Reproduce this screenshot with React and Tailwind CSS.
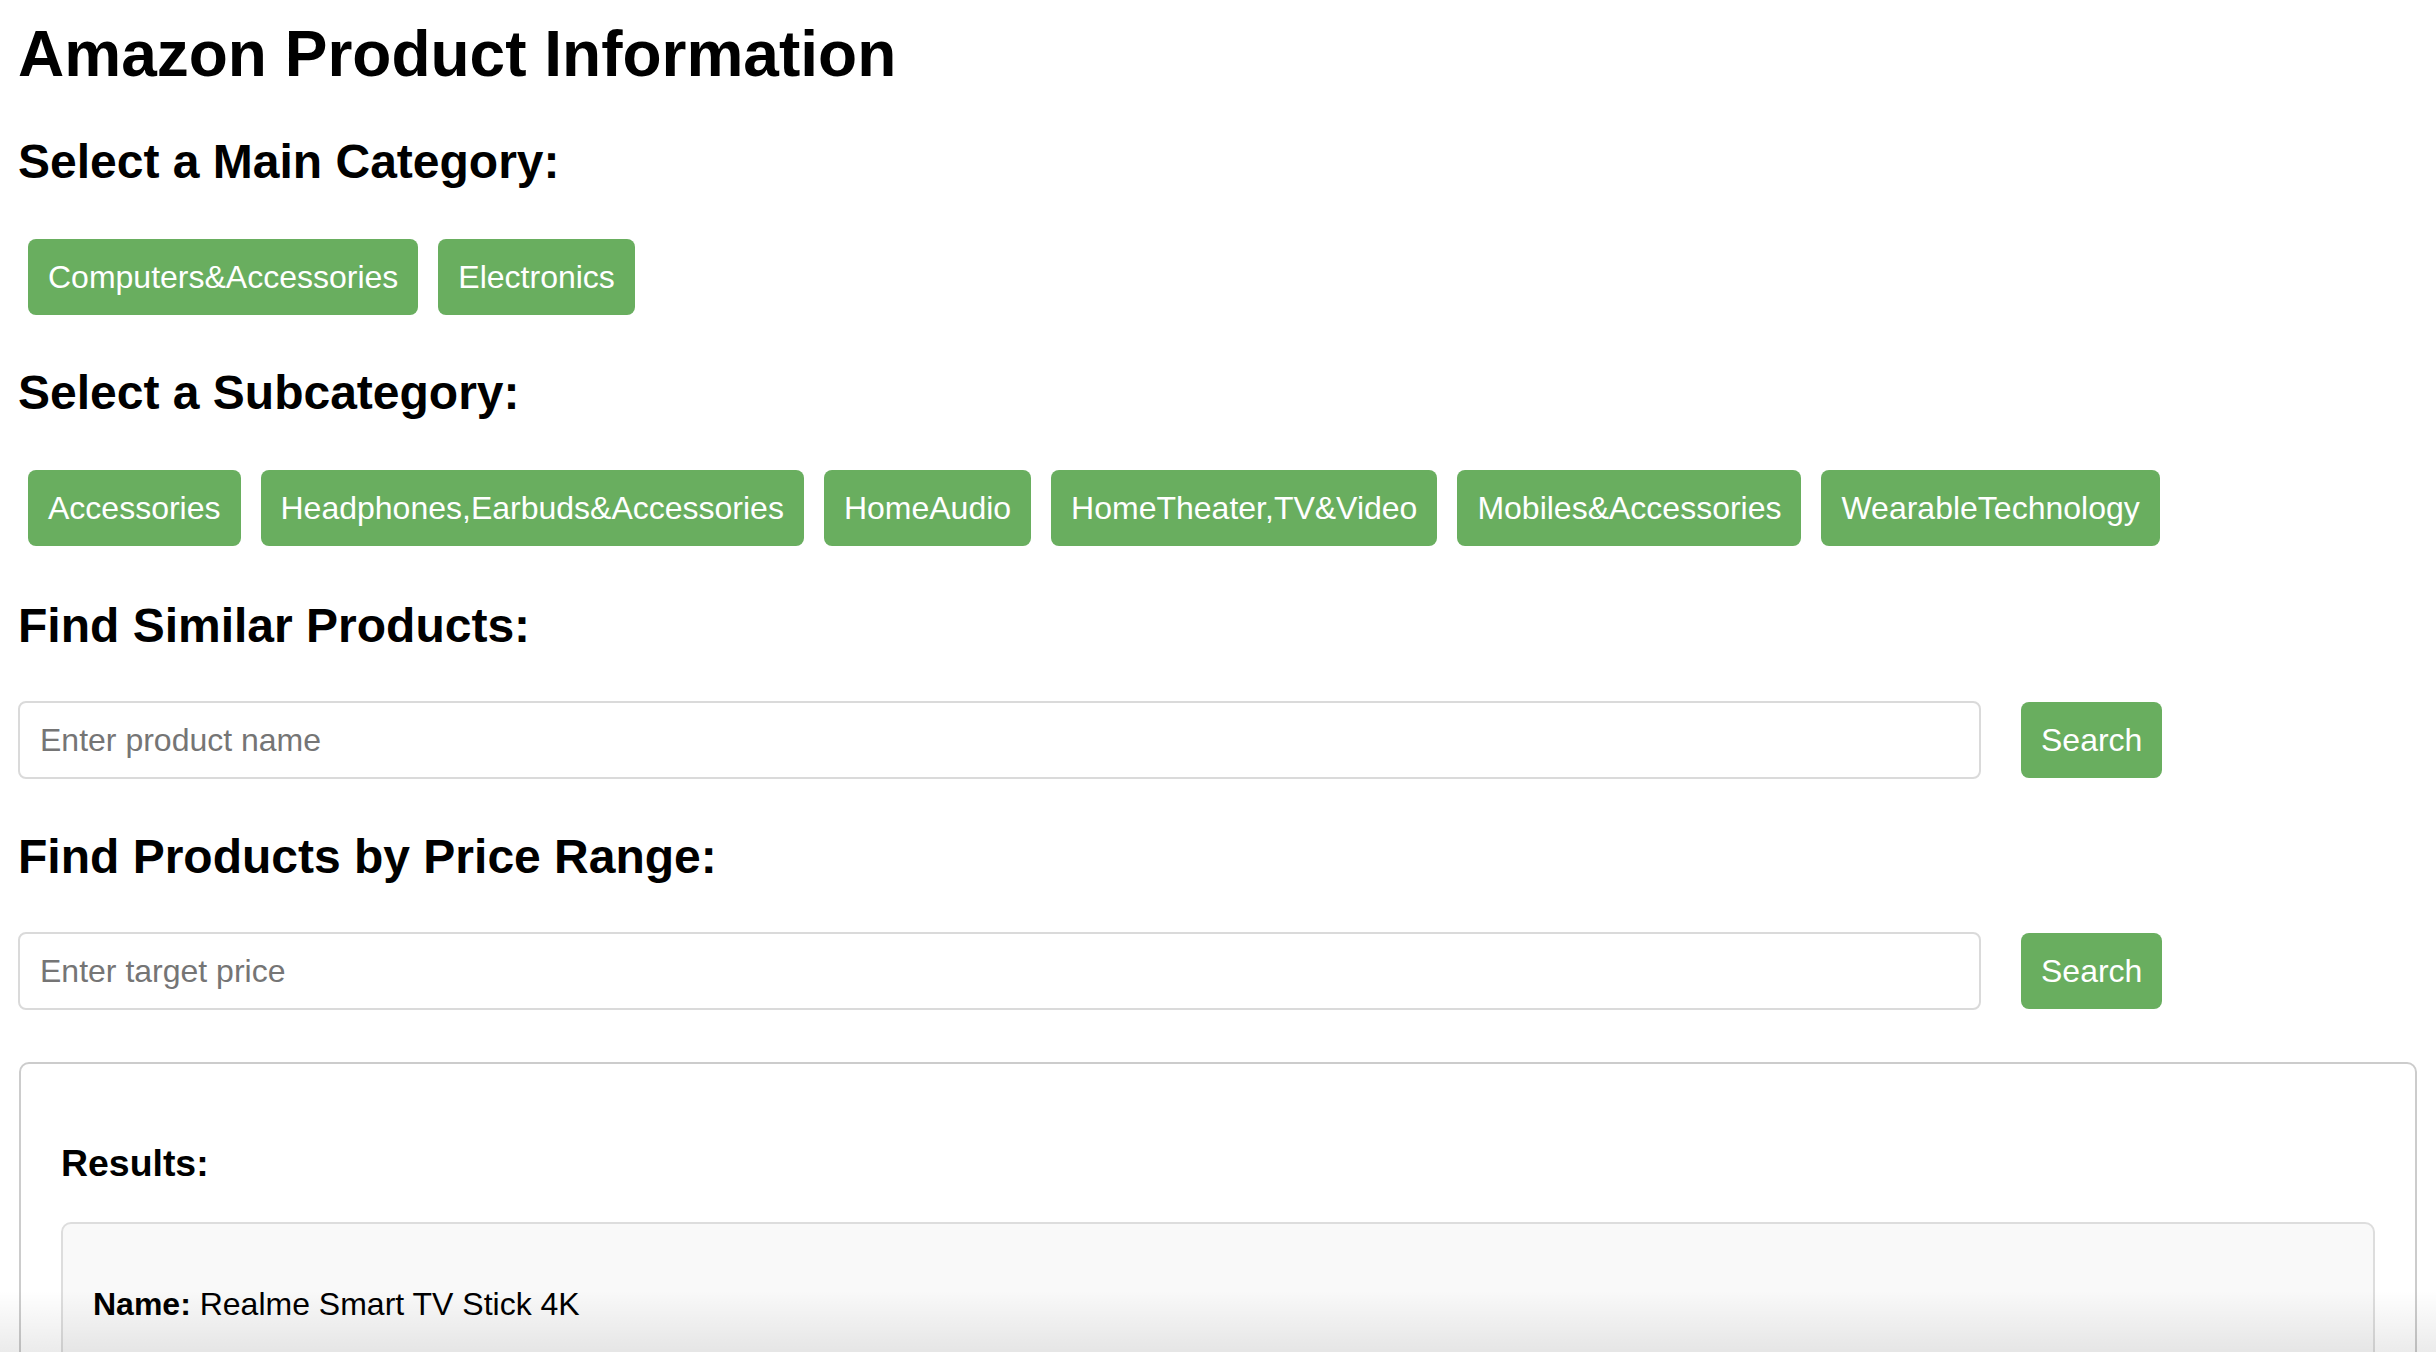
import React, { useState } from 'react';

const mainCategories = ['Computers&Accessories', 'Electronics'];
const subCategories = [
    'Accessories',
    'Headphones,Earbuds&Accessories',
    'HomeAudio',
    'HomeTheater,TV&Video',
    'Mobiles&Accessories',
    'WearableTechnology'
];

function GreenButton({ label, onClick }) {
    return (
        <button
            type="button"
            onClick={onClick}
            className="inline-flex items-center h-[76px] px-[20px] rounded-[8px] bg-[#69ae5f] text-white text-[32px] leading-[36px] whitespace-nowrap cursor-pointer"
        >
            {label}
        </button>
    );
}

function SearchRow({ placeholder, value, onChange }) {
    return (
        <div className="flex items-center mt-[48px]">
            <input
                type="text"
                value={value}
                onChange={onChange}
                placeholder={placeholder}
                className="w-[1963px] h-[78px] px-[20px] border-2 border-[#dadada] rounded-[8px] text-[32px] text-black placeholder:text-[#757575] outline-none"
            />
            <div className="ml-[40px]">
                <GreenButton label="Search" />
            </div>
        </div>
    );
}

export default function App() {
    const [productName, setProductName] = useState('');
    const [targetPrice, setTargetPrice] = useState('');

    return (
        <div className="relative min-h-[1352px] bg-white text-black font-['Liberation_Sans',Arial,sans-serif] overflow-hidden">
            <div className="flex flex-col px-[18px]">
                <h1 className="mt-[17px] text-[64px] leading-[74px] font-bold">Amazon Product Information</h1>

                <h2 className="mt-[43px] text-[48px] leading-[55px] font-bold">Select a Main Category:</h2>
                <div className="flex gap-[20px] ml-[10px] mt-[50px]">
                    {mainCategories.map((c) => (
                        <GreenButton key={c} label={c} />
                    ))}
                </div>

                <h2 className="mt-[50px] text-[48px] leading-[55px] font-bold">Select a Subcategory:</h2>
                <div className="flex gap-[20px] ml-[10px] mt-[50px]">
                    {subCategories.map((c) => (
                        <GreenButton key={c} label={c} />
                    ))}
                </div>

                <h2 className="mt-[52px] text-[48px] leading-[55px] font-bold">Find Similar Products:</h2>
                <SearchRow
                    placeholder="Enter product name"
                    value={productName}
                    onChange={(e) => setProductName(e.target.value)}
                />

                <h2 className="mt-[50px] text-[48px] leading-[55px] font-bold">Find Products by Price Range:</h2>
                <SearchRow
                    placeholder="Enter target price"
                    value={targetPrice}
                    onChange={(e) => setTargetPrice(e.target.value)}
                />

                <div className="mt-[52px] mx-[1px] border-2 border-[#cccccc] rounded-[10px] px-[40px] pt-[40px] pb-[40px]">
                    <h3 className="mt-[38px] mb-[37px] text-[37.44px] leading-[43px] font-bold">Results:</h3>
                    <div className="border-2 border-[#dddddd] bg-[#f9f9f9] rounded-[10px] px-[30px] pt-[30px] pb-[30px]">
                        <p className="mt-[32px] mb-[32px] text-[32px] leading-[37px]">
                            <span className="font-bold">Name:</span> Realme Smart TV Stick 4K
                        </p>
                    </div>
                </div>
            </div>

            {/* bottom fade */}
            <div className="pointer-events-none absolute left-0 right-0 top-[1290px] h-[62px] bg-gradient-to-b from-transparent to-[rgba(0,0,0,0.08)]" />
        </div>
    );
}
